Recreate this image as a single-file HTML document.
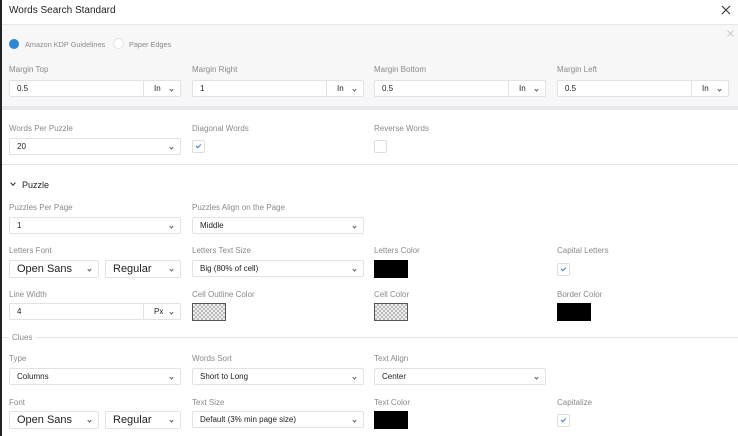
<!DOCTYPE html><html><head><style>
body{margin:0;width:738px;height:436px;overflow:hidden;background:#fff;font-family:"Liberation Sans",sans-serif;position:relative}
.a{position:absolute}
.lbl{position:absolute;font-size:8px;color:#8a8a8a}
.box{position:absolute;background:#fff;border:1px solid #e2e2e2;border-radius:2px;box-sizing:border-box;font-size:8px;color:#222;padding-left:7px;line-height:16px}
.ch{position:absolute;right:7px;top:0;font-size:8px;color:#555}
.ch:after{content:"";display:inline-block;width:2px;height:2px;border-right:1px solid #666;border-bottom:1px solid #666;transform:rotate(45deg);margin-top:5px}
.unit{position:absolute;top:-1px;height:17px;border:1px solid #e2e2e2;border-radius:2px;box-sizing:border-box;background:#fff;font-size:8px;padding-left:10px;line-height:15px;width:38px}
.cb{position:absolute;width:13px;height:13px;border:1px solid #ddd;border-radius:2px;box-sizing:border-box;background:#fff}
.cb.on:after{content:"";position:absolute;left:4px;top:2px;width:2px;height:4px;border-right:1.2px solid #2a7fd4;border-bottom:1.2px solid #2a7fd4;transform:rotate(45deg)}
.sw{position:absolute;width:34px;height:18px;background:#000}
.ck{position:absolute;width:34px;height:18px;border:1px solid #555;box-sizing:border-box;background-color:#eee;background-image:linear-gradient(45deg,#bbb 25%,transparent 25%,transparent 75%,#bbb 75%),linear-gradient(45deg,#bbb 25%,transparent 25%,transparent 75%,#bbb 75%);background-size:4px 4px;background-position:0 0,2px 2px}
.big{font-size:11px;line-height:16px}
</style></head><body>
<div class="a" style="left:9px;top:5px;font-size:10px;color:#222">Words Search Standard</div>
<div class="a" style="left:0;top:24px;width:738px;height:83px;background:#f7f7f8;border-top:1px solid #e6e6e6"></div>
<div class="a" style="left:0;top:106px;width:738px;height:4px;background:#e8e8ec"></div>
<svg class="a" style="left:721px;top:5px" width="10" height="10"><path d="M1 1L9 9M9 1L1 9" stroke="#333" stroke-width="1.1"/></svg>
<svg class="a" style="left:727px;top:30px" width="7" height="7"><path d="M0.5 0.5L6.5 6.5M6.5 0.5L0.5 6.5" stroke="#bbb" stroke-width="0.8"/></svg>
<div class="a" style="left:9px;top:39px;width:10px;height:10px;border-radius:50%;background:#2d86d8"></div>
<div class="lbl" style="left:25px;top:40px;font-size:7.3px">Amazon KDP Guidelines</div>
<div class="a" style="left:113px;top:38px;width:11px;height:11px;border-radius:50%;background:#fff;border:1px solid #e5e5e5;box-sizing:border-box"></div>
<div class="lbl" style="left:129px;top:40px;font-size:7.3px">Paper Edges</div>

<div class="lbl" style="left:9px;top:65px">Margin Top</div>
<div class="lbl" style="left:192px;top:65px">Margin Right</div>
<div class="lbl" style="left:374px;top:65px">Margin Bottom</div>
<div class="lbl" style="left:557px;top:65px">Margin Left</div>
<div class="box" style="left:9px;top:80px;width:172px;height:17px">0.5<div class="unit" style="right:-1px">In<span class="ch"></span></div></div>
<div class="box" style="left:192px;top:80px;width:172px;height:17px">1<div class="unit" style="right:-1px">In<span class="ch"></span></div></div>
<div class="box" style="left:374px;top:80px;width:172px;height:17px">0.5<div class="unit" style="right:-1px">In<span class="ch"></span></div></div>
<div class="box" style="left:557px;top:80px;width:172px;height:17px">0.5<div class="unit" style="right:-1px">In<span class="ch"></span></div></div>

<div class="lbl" style="left:9px;top:124px">Words Per Puzzle</div>
<div class="lbl" style="left:192px;top:124px">Diagonal Words</div>
<div class="lbl" style="left:374px;top:124px">Reverse Words</div>
<div class="box" style="left:9px;top:138px;width:172px;height:17px">20<span class="ch"></span></div>
<div class="cb on" style="left:192px;top:140px"></div>
<div class="cb" style="left:374px;top:140px"></div>
<div class="a" style="left:0;top:164px;width:738px;height:1px;background:#e4e4e8"></div>

<div class="a" style="left:11px;top:181px;width:3px;height:3px;border-right:1px solid #333;border-bottom:1px solid #333;transform:rotate(45deg)"></div>
<div class="a" style="left:22px;top:180px;font-size:9px;color:#222">Puzzle</div>
<div class="lbl" style="left:9px;top:203px">Puzzles Per Page</div>
<div class="lbl" style="left:192px;top:203px">Puzzles Align on the Page</div>
<div class="box" style="left:9px;top:217px;width:172px;height:17px">1<span class="ch"></span></div>
<div class="box" style="left:192px;top:217px;width:172px;height:17px">Middle<span class="ch"></span></div>

<div class="lbl" style="left:9px;top:246px">Letters Font</div>
<div class="lbl" style="left:192px;top:246px">Letters Text Size</div>
<div class="lbl" style="left:374px;top:246px">Letters Color</div>
<div class="lbl" style="left:557px;top:246px">Capital Letters</div>
<div class="box big" style="left:9px;top:260px;width:90px;height:18px">Open Sans<span class="ch"></span></div>
<div class="box big" style="left:105px;top:260px;width:76px;height:18px">Regular<span class="ch"></span></div>
<div class="box" style="left:192px;top:260px;width:172px;height:17px">Big (80% of cell)<span class="ch"></span></div>
<div class="sw" style="left:374px;top:260px"></div>
<div class="cb on" style="left:557px;top:263px"></div>

<div class="lbl" style="left:9px;top:290px">Line Width</div>
<div class="lbl" style="left:192px;top:290px">Cell Outline Color</div>
<div class="lbl" style="left:374px;top:290px">Cell Color</div>
<div class="lbl" style="left:557px;top:290px">Border Color</div>
<div class="box" style="left:9px;top:303px;width:172px;height:17px">4<div class="unit" style="right:-1px">Px<span class="ch"></span></div></div>
<div class="ck" style="left:192px;top:303px"></div>
<div class="ck" style="left:374px;top:303px"></div>
<div class="sw" style="left:557px;top:303px"></div>

<div class="a" style="left:0;top:337px;width:738px;height:1px;background:#e6e6e6"></div>
<div class="lbl" style="left:9px;top:333px;background:#fff;padding:0 3px">Clues</div>
<div class="lbl" style="left:9px;top:354px">Type</div>
<div class="lbl" style="left:192px;top:354px">Words Sort</div>
<div class="lbl" style="left:374px;top:354px">Text Align</div>
<div class="box" style="left:9px;top:368px;width:172px;height:17px">Columns<span class="ch"></span></div>
<div class="box" style="left:192px;top:368px;width:172px;height:17px">Short to Long<span class="ch"></span></div>
<div class="box" style="left:374px;top:368px;width:172px;height:17px">Center<span class="ch"></span></div>

<div class="lbl" style="left:9px;top:398px">Font</div>
<div class="lbl" style="left:192px;top:398px">Text Size</div>
<div class="lbl" style="left:374px;top:398px">Text Color</div>
<div class="lbl" style="left:557px;top:398px">Capitalize</div>
<div class="box big" style="left:9px;top:411px;width:90px;height:18px">Open Sans<span class="ch"></span></div>
<div class="box big" style="left:105px;top:411px;width:76px;height:18px">Regular<span class="ch"></span></div>
<div class="box" style="left:192px;top:411px;width:172px;height:17px">Default (3% min page size)<span class="ch"></span></div>
<div class="sw" style="left:374px;top:411px"></div>
<div class="cb on" style="left:557px;top:414px"></div>
<div class="a" style="left:0;top:0;width:2px;height:436px;background:#222;z-index:10"></div>
</body></html>
